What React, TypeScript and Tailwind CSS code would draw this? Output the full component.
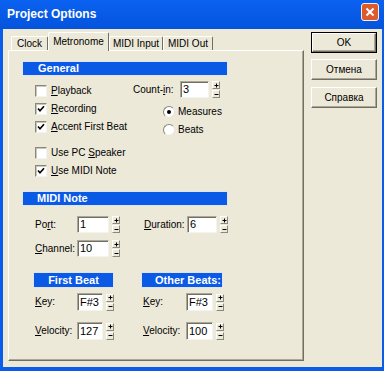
import React from "react";

const U = ({ children }: { children: React.ReactNode }) => (
  <span className="underline underline-offset-[1px]">{children}</span>
);

const Bar = ({ className, children }: { className: string; children: React.ReactNode }) => (
  <div
    className={`flex items-center bg-[#0a5ae6] text-[11px] leading-none font-bold text-white shadow-[0_0_0_1px_#dfe4ee] ${className}`}
  >
    {children}
  </div>
);

const Spin = () => (
  <div className="ml-[3px] flex h-[17px] w-[8px] flex-col justify-between">
    <div className="flex h-[8px] items-center justify-center border-t border-l border-white border-r border-b border-r-[#8a877c] border-b-[#8a877c] bg-[#ece9d8]">
      <svg width="5" height="5" viewBox="0 0 5 5">
        <path d="M2.5 0.5v4M0.5 2.5h4" stroke="#000" strokeWidth="1" />
      </svg>
    </div>
    <div className="flex h-[8px] items-center justify-center border-t border-l border-white border-r border-b border-r-[#8a877c] border-b-[#8a877c] bg-[#ece9d8]">
      <svg width="5" height="5" viewBox="0 0 5 5">
        <path d="M0.5 2.5h4" stroke="#000" strokeWidth="1" />
      </svg>
    </div>
  </div>
);

const Field = ({ value, className }: { value: string; className: string }) => (
  <div
    className={`flex items-center border-t border-l border-[#aca899] border-r border-b border-r-[#f4f3ee] border-b-[#f4f3ee] bg-white pl-[2px] text-[11px] leading-none text-black shadow-[inset_1px_1px_0_#716f64] ${className}`}
  >
    {value}
  </div>
);

const Check = ({ checked, children }: { checked?: boolean; children: React.ReactNode }) => (
  <div className="flex h-[18px] items-center gap-[4px]">
    <div className="flex h-[12px] w-[12px] items-center justify-center border-t border-l border-[#8a877c] border-r border-b border-r-[#f4f3ee] border-b-[#f4f3ee] bg-white shadow-[inset_1px_1px_0_#c9c6b8]">
      {checked && (
        <svg width="8" height="8" viewBox="0 0 8 8">
          <path d="M1 3.5 L3 5.8 L7 1.2" fill="none" stroke="#000" strokeWidth="1.6" />
        </svg>
      )}
    </div>
    <span>{children}</span>
  </div>
);

const Radio = ({ on, children }: { on?: boolean; children: React.ReactNode }) => (
  <div className="flex h-[18px] items-center gap-[3px]">
    <div className="flex h-[12px] w-[12px] items-center justify-center rounded-full border border-t-[#8a877c] border-l-[#8a877c] border-r-[#e8e6dc] border-b-[#e8e6dc] bg-white">
      {on && <div className="h-[4px] w-[4px] rounded-full bg-black" />}
    </div>
    <span>{children}</span>
  </div>
);

const Btn = ({ children, def }: { children: React.ReactNode; def?: boolean }) => (
  <div className={def ? "border border-black" : ""}>
    <div
      className={`flex items-center justify-center border-t border-l border-white border-r border-b border-r-[#716f64] border-b-[#716f64] bg-[#ece9d8] shadow-[inset_-1px_-1px_0_#aca899] ${def ? "h-[19px]" : "h-[21px]"}`}
    >
      {children}
    </div>
  </div>
);

const Tab = ({ label, className, active }: { label: string; className: string; active?: boolean }) => (
  <div
    className={`flex items-center justify-center rounded-t-[2px] border-t border-l border-white border-r border-r-[#716f64] bg-[#ece9d8] ${
      active ? "relative z-10 -mb-[1px] h-[19px]" : "h-[14px]"
    } ${className}`}
  >
    {label}
  </div>
);

export default function App() {
  return (
    <div className="flex h-[371px] w-[384px] flex-col bg-[#0a5de8] font-['Liberation_Sans',Arial,sans-serif] text-[10px] leading-none text-black">
      <div className="flex h-[29px] items-start justify-between bg-gradient-to-b from-[#0b62f0] to-[#0453dc] pl-[7px] pr-[5px]">
        <span className="mt-[8px] text-[12px] font-bold text-white">Project Options</span>
        <div className="mt-[3px] flex h-[18px] w-[18px] items-center justify-center rounded-[3px] border border-[#f2efe8] bg-[#dc5a2c]">
          <svg width="10" height="10" viewBox="0 0 10 10">
            <path d="M1.5 1.5 L8.5 8.5 M8.5 1.5 L1.5 8.5" stroke="#fff" strokeWidth="2" />
          </svg>
        </div>
      </div>

      <div className="ml-[3px] mr-[2px] mb-[4px] flex flex-1 bg-[#ece9d8] pl-[5px] pt-[3px]">
        <div className="w-[296px]">
          <div className="flex h-[18px] items-end pl-[3px]">
            <Tab label="Clock" className="w-[37px]" />
            <Tab label="Metronome" className="w-[61px]" active />
            <Tab label="MIDI Input" className="w-[54px]" />
            <Tab label="MIDI Out" className="w-[50px]" />
          </div>
          <div className="h-[311px] border-t border-l border-white border-r border-b border-r-[#716f64] border-b-[#716f64] pl-[14px] pt-[11px] shadow-[inset_-1px_-1px_0_#aca899]">
            <Bar className="h-[13px] w-[204px] pl-[15px]">General</Bar>
            <div className="mt-[6px] flex">
              <div className="w-[110px] pl-[12px] pt-[1px]">
                <Check>
                  <U>P</U>layback
                </Check>
                <Check checked>
                  <U>R</U>ecording
                </Check>
                <Check checked>
                  <U>A</U>ccent First Beat
                </Check>
                <div className="mt-[8px]">
                  <Check>
                    Use PC <U>S</U>peaker
                  </Check>
                  <Check checked>
                    <U>U</U>se MIDI Note
                  </Check>
                </div>
              </div>
              <div>
                <div className="flex h-[17px] items-center">
                  <span className="w-[47px]">
                    Count-<U>i</U>n:
                  </span>
                  <Field value="3" className="h-[17px] w-[29px]" />
                  <Spin />
                </div>
                <div className="mt-[5px] pl-[30px]">
                  <Radio on>Measures</Radio>
                  <Radio>Beats</Radio>
                </div>
              </div>
            </div>

            <Bar className="mt-[12px] h-[13px] w-[204px] pl-[14px]">MIDI Note</Bar>
            <div className="mt-[11px] flex h-[17px] items-center">
              <div className="flex w-[121px] items-center pl-[12px]">
                <span className="w-[42px]">
                  Po<U>r</U>t:
                </span>
                <Field value="1" className="h-[17px] w-[32px]" />
                <Spin />
              </div>
              <span className="w-[43px]">
                <U>D</U>uration:
              </span>
              <Field value="6" className="h-[17px] w-[30px]" />
              <Spin />
            </div>
            <div className="mt-[7px] flex h-[17px] items-center pl-[12px]">
              <span className="w-[42px]">
                <U>C</U>hannel:
              </span>
              <Field value="10" className="h-[17px] w-[32px]" />
              <Spin />
            </div>

            <div className="mt-[16px] flex">
              <div className="w-[119px]">
                <Bar className="ml-[11px] h-[14px] w-[79px] justify-center">First Beat</Bar>
                <div className="mt-[6px] flex h-[18px] items-center pl-[12px]">
                  <span className="w-[42px]">
                    <U>K</U>ey:
                  </span>
                  <Field value="F#3" className="h-[18px] w-[26px]" />
                  <Spin />
                </div>
                <div className="mt-[11px] flex h-[18px] items-center pl-[12px]">
                  <span className="w-[42px]">
                    <U>V</U>elocity:
                  </span>
                  <Field value="127" className="h-[18px] w-[26px]" />
                  <Spin />
                </div>
              </div>
              <div>
                <Bar className="h-[14px] w-[80px] justify-end pr-[1px]">Other Beats:</Bar>
                <div className="mt-[6px] flex h-[18px] items-center pl-[1px]">
                  <span className="w-[43px]">
                    <U>K</U>ey:
                  </span>
                  <Field value="F#3" className="h-[18px] w-[27px]" />
                  <Spin />
                </div>
                <div className="mt-[11px] flex h-[18px] items-center pl-[1px]">
                  <span className="w-[43px]">
                    <U>V</U>elocity:
                  </span>
                  <Field value="100" className="h-[18px] w-[27px]" />
                  <Spin />
                </div>
              </div>
            </div>
          </div>
        </div>

        <div className="ml-[7px] w-[66px]">
          <Btn def>OK</Btn>
          <div className="mt-[6px]">
            <Btn>Отмена</Btn>
          </div>
          <div className="mt-[7px]">
            <Btn>Справка</Btn>
          </div>
        </div>
      </div>
    </div>
  );
}
